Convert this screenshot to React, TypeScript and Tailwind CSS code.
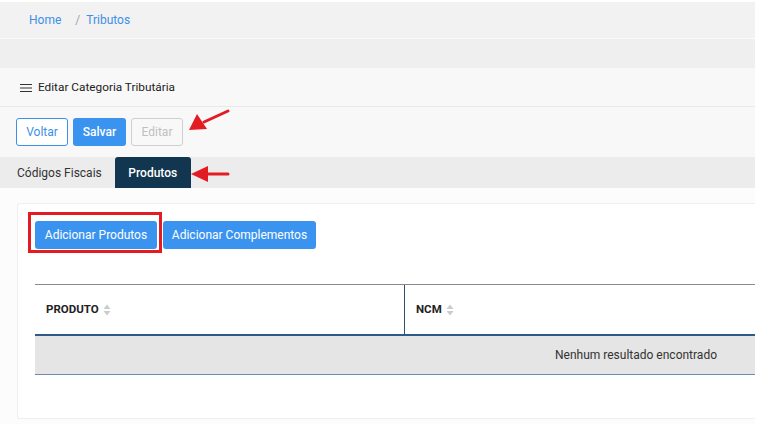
const font = { fontFamily: "Roboto, 'Liberation Sans', sans-serif" };

function SortIcon() {
  return (
    <svg className="ml-[4px] inline-block" width="8" height="12" viewBox="0 0 8 12" fill="#cccccc">
      <path d="M4 0.5L7.5 5H0.5Z" />
      <path d="M4 11.5L0.5 7H7.5Z" />
    </svg>
  );
}

export default function App() {
  return (
    <div className="relative w-[760px] h-[424px] bg-white overflow-hidden" style={font}>
      <div className="w-[755px] pt-[2px]">
        {/* breadcrumb */}
        <div className="h-[36px] bg-[#f2f2f2] flex items-center pl-[29px] text-[12px] text-[#3d8fe8]">
          <span>Home</span>
          <span className="ml-[14px] text-[#9aa5b1]">/</span>
          <span className="ml-[6px]">Tributos</span>
        </div>
        <div className="h-[1px] bg-[#fafafa]" />
        <div className="h-[29px] bg-[#efefef]" />
        <div className="h-[1px] bg-[#f8f8f8]" />

        {/* title */}
        <div className="h-[37px] bg-[#f8f8f8] flex items-center pl-[20px] text-[11.8px] text-[#222]">
          <svg width="12" height="10" viewBox="0 0 12 10" stroke="#333" strokeWidth="1.2">
            <path d="M0 1.5H12M0 5H12M0 8.5H12" />
          </svg>
          <span className="ml-[6px]">Editar Categoria Tributária</span>
        </div>
        <div className="h-[1px] bg-[#e9e9e9]" />

        {/* actions */}
        <div className="h-[50px] bg-[#f8f8f8] flex items-center gap-[5px] pl-[16px] text-[12px]">
          <button className="h-[28px] w-[52px] rounded-[3px] border border-[#3d8fe8] bg-white text-[#3d8fe8]">Voltar</button>
          <button className="h-[28px] w-[53px] rounded-[3px] bg-[#3a94ef] text-white font-medium">Salvar</button>
          <button className="h-[28px] w-[52px] rounded-[3px] border border-[#cfcfcf] bg-[#f8f8f8] text-[#c0c0c0]">Editar</button>
        </div>

        {/* tabs */}
        <div className="h-[31px] bg-[#ececec] flex items-end text-[12px]">
          <div className="h-[31px] flex items-center pl-[17px] pr-[13px] text-[#333]">Códigos Fiscais</div>
          <div className="h-[31px] w-[76px] flex items-center justify-center rounded-t-[3px] bg-[#12364f] text-white font-medium">Produtos</div>
        </div>

        {/* content */}
        <div className="bg-[#fcfcfc] pl-[17px] pt-[15px] pb-[6px]">
          <div className="bg-white border border-[#efefef] border-r-0 rounded-l-[3px] h-[216px] pt-[17px] pl-[17px] overflow-hidden">
            <div className="flex gap-[6px] text-[12px] text-white">
              <button className="h-[28px] w-[122px] rounded-[3px] bg-[#3a94ef]">Adicionar Produtos</button>
              <button className="h-[28px] w-[153px] rounded-[3px] bg-[#3a94ef]">Adicionar Complementos</button>
            </div>

            <div className="mt-[35px] w-[1202px] border-t border-[#8a8a8a]">
              <div className="h-[49px] flex text-[11.5px] font-bold text-[#222]">
                <div className="w-[370px] border-r border-[#2c4f73] flex items-center pl-[11px]">
                  PRODUTO
                  <SortIcon />
                </div>
                <div className="flex-1 flex items-center pl-[11px]">
                  NCM
                  <SortIcon />
                </div>
              </div>
              <div className="h-[2px] bg-[#2f5a88]" />
              <div className="h-[38px] bg-[#e5e5e5] flex items-center justify-center text-[12px] text-[#333]">
                Nenhum resultado encontrado
              </div>
              <div className="h-[1px] bg-[#6a8bb0]" />
            </div>
          </div>
        </div>
      </div>

      {/* annotations */}
      <svg className="absolute left-0 top-0 pointer-events-none" width="760" height="424">
        <rect x="29.5" y="213.5" width="131" height="38" fill="none" stroke="#e31b23" strokeWidth="3" />
        <path d="M228 111L204 122" stroke="#e31b23" strokeWidth="3" strokeLinecap="round" />
        <path d="M189 130L197 114L207 129Z" fill="#e31b23" />
        <path d="M228 174H206" stroke="#e31b23" strokeWidth="3" strokeLinecap="round" />
        <path d="M191 174L208 166V182Z" fill="#e31b23" />
      </svg>
    </div>
  );
}
